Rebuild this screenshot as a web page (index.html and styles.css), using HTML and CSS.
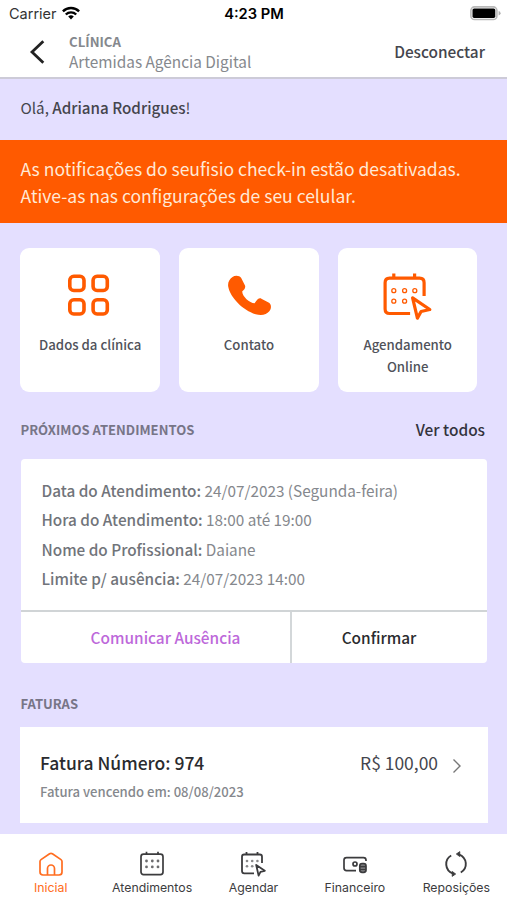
FILE: index.html
```html
<!DOCTYPE html>
<html lang="pt-BR">
<head>
<meta charset="utf-8">
<meta name="viewport" content="width=device-width, initial-scale=1">
<title>Clínica</title>
<link rel="stylesheet" href="styles.css">
</head>
<body>
<div class="app">
  <div class="status">
    <div class="carrier"><span>Carrier</span>
      <svg class="wifi" width="18" height="14" viewBox="0 0 18 14" fill="none" stroke="#000" stroke-width="2.4"><path d="M.9 5.3a11.6 11.6 0 0 1 16.2 0"/><path d="M3.8 8.5a7.5 7.5 0 0 1 10.4 0"/><path d="M9 13.4 6.2 10.6a4 4 0 0 1 5.6 0z" fill="#000" stroke="none"/></svg>
    </div>
    <div class="clock">4:23 PM</div>
    <svg class="battery" width="31" height="15" viewBox="0 0 31 15"><rect x=".9" y=".9" width="26" height="12.6" rx="3.6" fill="#fff" stroke="#b9b9b9" stroke-width="1.6"/><rect x="2.500" y="2.500" width="22.800" height="9.400" rx="1.600" fill="#000"/><path d="M28.600 5q2 .6 2 2.200t-2 2.200z" fill="#b0b0b0"/></svg>
  </div>
  <header class="header">
    <svg class="back" width="16" height="24" viewBox="0 0 16 24" fill="none" stroke="#222" stroke-width="2.800"><path d="M14.300 1.200 3 12l11.300 10.800"/></svg>
    <div class="clinic"><strong class="clinic-label">CLÍNICA</strong><span class="clinic-name">Artemidas Agência Digital</span></div>
    <a class="logout">Desconectar</a>
  </header>
  <p class="hello">Olá, <b>Adriana Rodrigues</b>!</p>
  <div class="banner">As notificações do seufisio check-in estão desativadas.<br>Ative-as nas configurações de seu celular.</div>
  <div class="tiles">
    <div class="tile">
      <svg width="52" height="52" viewBox="0 0 52 52" fill="none" stroke="#ff5a00" stroke-width="3.600"><rect x="5.800" y="5.300" width="14.200" height="14.200" rx="4"/><rect x="29.100" y="5.300" width="14.200" height="14.200" rx="4"/><rect x="5.800" y="28.800" width="14.200" height="14.200" rx="4"/><rect x="29.100" y="28.800" width="14.200" height="14.200" rx="4"/></svg>
      <span>Dados da clínica</span>
    </div>
    <div class="tile">
      <svg width="52" height="52" viewBox="0 0 52 52" fill="#ff5a00"><path d="M9.500 6C12 4.300 16.500 4.400 18.200 7L22 14.500C22.800 16.500 21.300 18.700 19.300 20.200C18.600 24.500 26.300 32.300 31.600 32.300C34 28.500 36.200 26.500 38.400 27.700L46 31.700C48.600 33.300 48.500 37.500 46.300 40.300C43.500 43.800 38.500 45 32.600 43.200C20 39.400 7.100 26.500 5.200 15.500C4.600 11.500 6.400 8.200 9.500 6Z"/></svg>
      <span>Contato</span>
    </div>
    <div class="tile">
      <svg width="52" height="52" viewBox="0 0 52 52" fill="none" stroke="#ff5a00" stroke-width="3.200"><g transform="translate(-.4 -1.800)"><path d="M28.500 44.300H8q-4.500 0-4.500-4.500V13.500Q3.500 9 8 9h30q4.500 0 4.500 4.500v13.200M12.200 9V4.200M33 9V4.200"/><g stroke-width="1.300"><circle cx="12.200" cy="21.500" r="2"/><circle cx="23" cy="21.500" r="2"/><circle cx="33.200" cy="21.500" r="2"/><circle cx="12.200" cy="32" r="2"/><circle cx="23" cy="32" r="2"/></g><path d="m31 28.700 17.200 11.600-8.700 2-3.700 6.600z" fill="#fff" stroke-linejoin="round"/></g></svg>
      <span>Agendamento<br>Online</span>
    </div>
  </div>
  <div class="section-head"><h2>PRÓXIMOS ATENDIMENTOS</h2><a class="all">Ver todos</a></div>
  <section class="visit">
    <div class="details">
      <p><b>Data do Atendimento:</b> 24/07/2023 (Segunda-feira)</p>
      <p><b>Hora do Atendimento:</b> 18:00 até 19:00</p>
      <p><b>Nome do Profissional:</b> Daiane</p>
      <p><b>Limite p/ ausência:</b> 24/07/2023 14:00</p>
    </div>
    <div class="actions"><a class="absence">Comunicar Ausência</a><a class="confirm">Confirmar</a></div>
  </section>
  <h2 class="invoices-title">FATURAS</h2>
  <section class="invoice">
    <div><div class="number">Fatura Número: 974</div><div class="due">Fatura vencendo em: 08/08/2023</div></div>
    <div class="amount"><span>R$ 100,00</span><svg width="10" height="16" viewBox="0 0 10 16" fill="none" stroke="#777" stroke-width="1.400"><path d="m1.500 1.500 6.500 6.500-6.500 6.500"/></svg></div>
  </section>
  <nav class="tabs">
    <a class="tab active"><svg width="26" height="26" viewBox="0 0 26 26" fill="none" stroke="currentColor" stroke-width="1.700" stroke-linejoin="round"><path d="M2 10.500q0-1.200 1-1.900l8.600-5.800q1.400-.9 2.800 0L23 8.600q1 .7 1 1.900V21q0 3-3 3H5q-3 0-3-3z"/><path d="M9.500 24v-6.500a3.500 3.500 0 0 1 7 0V24"/></svg><span>Inicial</span></a>
    <a class="tab"><svg width="26" height="26" viewBox="0 0 26 26" fill="none" stroke="currentColor" stroke-width="1.700"><rect x="2" y="3.200" width="22" height="20.400" rx="2.500"/><path d="M7.500 3.400V.8M19 3.400V.8"/><g fill="currentColor" stroke="none" opacity=".75"><circle cx="7.500" cy="10" r="1.400"/><circle cx="13.300" cy="10" r="1.400"/><circle cx="19" cy="10" r="1.400"/><circle cx="7.500" cy="15.900" r="1.400"/><circle cx="13.300" cy="15.900" r="1.400"/><circle cx="19" cy="15.900" r="1.400"/></g></svg><span>Atendimentos</span></a>
    <a class="tab"><svg width="26" height="26" viewBox="0 0 26 26" fill="none" stroke="currentColor" stroke-width="1.800"><path d="M14 22.300H4.200Q2 22.300 2 20.100V5.700Q2 3.500 4.200 3.500h15.600Q22 3.500 22 5.700V12M6.500 3.500V.9M17.500 3.500V.9"/><g fill="currentColor" stroke="none" opacity=".6"><circle cx="7" cy="10" r="1.300"/><circle cx="12.200" cy="10" r="1.300"/><circle cx="17.400" cy="10" r="1.300"/><circle cx="7" cy="15.200" r="1.300"/><circle cx="12.200" cy="15.200" r="1.300"/></g><path d="m16.200 14 8.600 5.800-4.300 1-1.900 3.800z" stroke-linejoin="round"/></svg><span>Agendar</span></a>
    <a class="tab"><svg width="26" height="26" viewBox="0 0 26 26" fill="none" stroke="currentColor" stroke-width="1.700"><path d="M14 19.600H4.500Q2 19.600 2 17.100v-8Q2 6.600 4.500 6.600h17Q24 6.600 24 9.100v.8"/><circle cx="13" cy="13" r="2"/><rect x="17.800" y="12.700" width="6.200" height="8.600" rx="2.300" fill="#8a8a8c"/><path d="M17.800 15.600h6.200M17.800 18.500h6.200"/></svg><span>Financeiro</span></a>
    <a class="tab"><svg width="26" height="26" viewBox="0 0 26 26" fill="none" stroke="currentColor" stroke-width="1.900"><path d="M8.200 4.500C1.200 8.500 1.300 19.300 10.300 22.700M17.800 21.500C24.900 17.400 24.700 6.700 15.700 3.300"/><path d="M13.300 3 16.800.6v5zM12.700 23l-3.500 2.400v-5z" fill="currentColor" stroke-width=".8"/></svg><span>Reposições</span></a>
  </nav>
</div>
</body>
</html>
```
FILE: styles.css
```css
* { box-sizing: border-box; }
body { margin: 0; background: #e4dfff; font-family: "Noto Sans CJK SC", "Noto Sans", sans-serif; color: #44454d; }
p, h2 { margin: 0; }
svg { display: block; flex: none; }
b, strong { font-weight: 500; }
.app { width: 507px; height: 900px; display: flex; flex-direction: column; overflow: hidden; }
.status { height: 28px; flex: none; background: #fff; display: grid; grid-template-columns: 1fr auto 1fr; align-items: center; padding: 0 6px 0 9px; font: 14.5px/28px Inter, sans-serif; color: #111; }
.carrier { display: flex; align-items: center; gap: 6px; color: #333; }
.carrier svg { margin-left: -1px; margin-top: -2px; }
.clock { font-size: 14.700px; font-weight: 600; color: #000; margin-right: 2px; }
.battery { justify-self: end; margin-top: -1px; }
.header { height: 51px; flex: none; background: #fff; border-bottom: 2px solid #cdcbd8; display: flex; align-items: center; padding: 0 22px 2px 29px; }
.clinic { display: flex; flex-direction: column; margin-left: 24px; color: #85888d; }
.clinic-label { font-size: 13.200px; line-height: 20px; font-weight: 700; }
.clinic-name { font-size: 15.350px; line-height: 18px; padding-bottom: 2px; }
.logout { margin-left: auto; font-size: 15.400px; line-height: 20px; padding-bottom: 2px; font-weight: 500; }
.hello { height: 61px; flex: none; padding: 0 20.500px; font-size: 15.200px; line-height: 56px; }
.banner { height: 83px; flex: none; background: #ff5a00; color: #ffe9d6; padding: 15px 20.500px; font-size: 17.500px; line-height: 27px; }
.tiles { display: grid; grid-template-columns: repeat(3, 139.500px); gap: 19.300px; padding: 25px 20px 0 20.400px; }
.tile { height: 144px; background: #fff; border-radius: 9px; display: flex; flex-direction: column; align-items: center; padding-top: 23px; text-align: center; font-size: 13.200px; line-height: 22px; font-weight: 500; color: #50525a; }
.tile span { margin-top: 11px; }
.section-head { height: 67px; flex: none; display: flex; align-items: center; justify-content: space-between; padding: 9px 22px 0 20.500px; }
h2 { font-size: 13.050px; line-height: 20px; font-weight: 700; color: #777587; }
.all { font-size: 15.450px; line-height: 20px; padding-bottom: 2px; font-weight: 500; color: #33333d; }
.visit { height: 204px; flex: none; margin: 0 20px 0 21px; background: #fff; border-radius: 4px; display: flex; flex-direction: column; }
.details { flex: 1; padding: 17px 20px 0 20.500px; font-size: 15.320px; line-height: 29.300px; color: #85888d; }
.details b { color: #71747a; }
.actions { height: 53px; border-top: 2px solid #d0d4d6; display: grid; grid-template-columns: 271px 1fr; text-align: center; font-size: 15.400px; line-height: 51px; font-weight: 500; }
.absence { color: #bd68da; border-right: 2px solid #d3d7d9; padding-left: 20px; }
.confirm { color: #2a2b2e; padding-right: 21px; }
.invoices-title { margin: 31px 20.500px 0; }
.invoice { height: 96px; flex: none; margin: 13px 19px 0 20px; background: #fff; display: flex; justify-content: space-between; padding: 23px 26px 0 20px; }
.number { font-size: 17.500px; line-height: 25px; font-weight: 500; color: #2a2b2e; }
.due { font-size: 13.120px; line-height: 20px; margin-top: 7px; font-weight: 500; color: #85888d; }
.amount { display: flex; height: 26px; gap: 14px; font-size: 17.450px; line-height: 25px; }
.amount svg { margin-top: 8px; }
.tabs { margin-top: auto; height: 66px; flex: none; background: #fff; display: grid; grid-template-columns: repeat(5, 1fr); font: 12.300px/16px Inter, sans-serif; }
.tab { display: flex; flex-direction: column; align-items: center; padding-top: 17px; gap: 3px; color: #3c3c3e; }
.active { color: #ff6d20; }
```
